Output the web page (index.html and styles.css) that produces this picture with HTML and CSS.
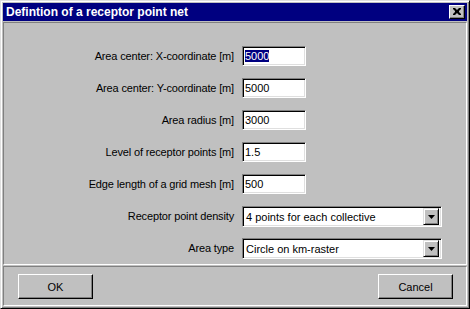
FILE: index.html
```html
<!DOCTYPE html>
<html lang="en">

<head>
  <meta charset="UTF-8" />
  <title>Defintion of a receptor point net</title>
  <link rel="stylesheet" href="styles.css">
</head>

<body>
  <div class="window">

    <!-- title bar -->
    <div class="titlebar">
      <span class="title">Defintion of a receptor point net</span>
      <span class="close">
        <svg width="8" height="7" viewBox="0 0 8 7">
          <path d="M0 0h2l2 2 2-2h2v1l-2 2v1l2 2v1h-2l-2-2-2 2h-2v-1l2-2v-1l-2-2z" fill="#000" />
        </svg>
      </span>
    </div>

    <div class="client">

      <!-- input fields -->
      <div class="panel fields">
        <div class="row">
          <label>Area center: X-coordinate [m]</label>
          <div class="edit"><span class="selected">5000</span></div>
        </div>
        <div class="row">
          <label>Area center: Y-coordinate [m]</label>
          <div class="edit">5000</div>
        </div>
        <div class="row">
          <label>Area radius [m]</label>
          <div class="edit">3000</div>
        </div>
        <div class="row">
          <label>Level of receptor points [m]</label>
          <div class="edit">1.5</div>
        </div>
        <div class="row">
          <label>Edge length of a grid mesh [m]</label>
          <div class="edit">500</div>
        </div>
        <div class="row">
          <label>Receptor point density</label>
          <div class="combo">
            <span class="value">4 points for each collective</span>
            <span class="drop"><svg width="7" height="4" viewBox="0 0 7 4"><path d="M0 0h7l-3.5 4z" fill="#000" /></svg></span>
          </div>
        </div>
        <div class="row">
          <label>Area type</label>
          <div class="combo">
            <span class="value">Circle on km-raster</span>
            <span class="drop"><svg width="7" height="4" viewBox="0 0 7 4"><path d="M0 0h7l-3.5 4z" fill="#000" /></svg></span>
          </div>
        </div>
      </div>

      <!-- dialog buttons -->
      <div class="panel buttons">
        <button>OK</button>
        <button>Cancel</button>
      </div>

    </div>
  </div>
</body>

</html>
```

FILE: styles.css
```css
* {
  margin: 0;
  padding: 0;
  box-sizing: border-box;
}

body {
  background: #c0c0c0;
  font: 11px "Liberation Sans", Arial, sans-serif;
  color: #000;
}

.window {
  width: 470px;
  height: 309px;
  padding: 1px;
  background: #c0c0c0;
  border-top: 1px solid #dfdfdf;
  border-left: 1px solid #dfdfdf;
  border-right: 1px solid #000;
  border-bottom: 1px solid #000;
  box-shadow: inset 1px 1px #fff, inset -1px -1px #808080;
  display: flex;
  flex-direction: column;
}

.titlebar {
  height: 18px;
  margin: 1px 1px 0 1px;
  background: #000080;
  display: flex;
  align-items: center;
  justify-content: space-between;
  padding: 0 2px 0 3px;
}

.title {
  color: #fff;
  font-weight: bold;
  font-size: 12px;
}

.close {
  width: 16px;
  height: 14px;
  background: #c0c0c0;
  border-top: 1px solid #fff;
  border-left: 1px solid #fff;
  border-right: 1px solid #000;
  border-bottom: 1px solid #000;
  box-shadow: inset -1px -1px #808080;
  display: flex;
  align-items: center;
  justify-content: center;
  padding-bottom: 1px;
}

.client {
  flex: 1;
  display: flex;
  flex-direction: column;
  padding: 1px;
}

.panel {
  border-top: 1px solid #808080;
  border-left: 1px solid #808080;
  border-right: 1px solid #fff;
  border-bottom: 1px solid #fff;
}

.fields {
  height: 243px;
  padding: 23px 0 0 1px;
  display: grid;
  grid-template-columns: 229px 200px;
  grid-auto-rows: 20px;
  row-gap: 12px;
  column-gap: 8px;
  align-content: start;
}

.row {
  display: contents;
}

.row label {
  text-align: right;
  line-height: 20px;
  letter-spacing: -0.15px;
}

.edit {
  width: 64px;
  height: 20px;
  background: #fff;
  border-top: 1px solid #808080;
  border-left: 1px solid #808080;
  border-right: 1px solid #fff;
  border-bottom: 1px solid #fff;
  box-shadow: inset 1px 1px #000, inset -1px -1px #dfdfdf;
  padding: 0 0 0 2px;
  line-height: 18px;
}

.selected {
  background: #000080;
  color: #fff;
}

.combo {
  width: 200px;
  height: 21px;
  background: #fff;
  border-top: 1px solid #808080;
  border-left: 1px solid #808080;
  border-right: 1px solid #fff;
  border-bottom: 1px solid #fff;
  box-shadow: inset 1px 1px #000, inset -1px -1px #dfdfdf;
  display: flex;
  align-items: center;
  justify-content: space-between;
  padding: 2px 2px 2px 3px;
}

.drop {
  width: 16px;
  height: 17px;
  background: #c0c0c0;
  border-top: 1px solid #dfdfdf;
  border-left: 1px solid #dfdfdf;
  border-right: 1px solid #000;
  border-bottom: 1px solid #000;
  box-shadow: inset 1px 1px #fff, inset -1px -1px #808080;
  display: flex;
  align-items: center;
  justify-content: center;
}

.buttons {
  flex: 1;
  margin-top: 1px;
  display: flex;
  justify-content: space-between;
  align-items: flex-start;
  padding: 7px 13px 0 14px;
}

.buttons button {
  width: 75px;
  height: 25px;
  background: #c0c0c0;
  font: 11px "Liberation Sans", Arial, sans-serif;
  color: #000;
  border-top: 1px solid #fff;
  border-left: 1px solid #fff;
  border-right: 1px solid #000;
  border-bottom: 1px solid #000;
  box-shadow: inset -1px -1px #808080;
}
```
